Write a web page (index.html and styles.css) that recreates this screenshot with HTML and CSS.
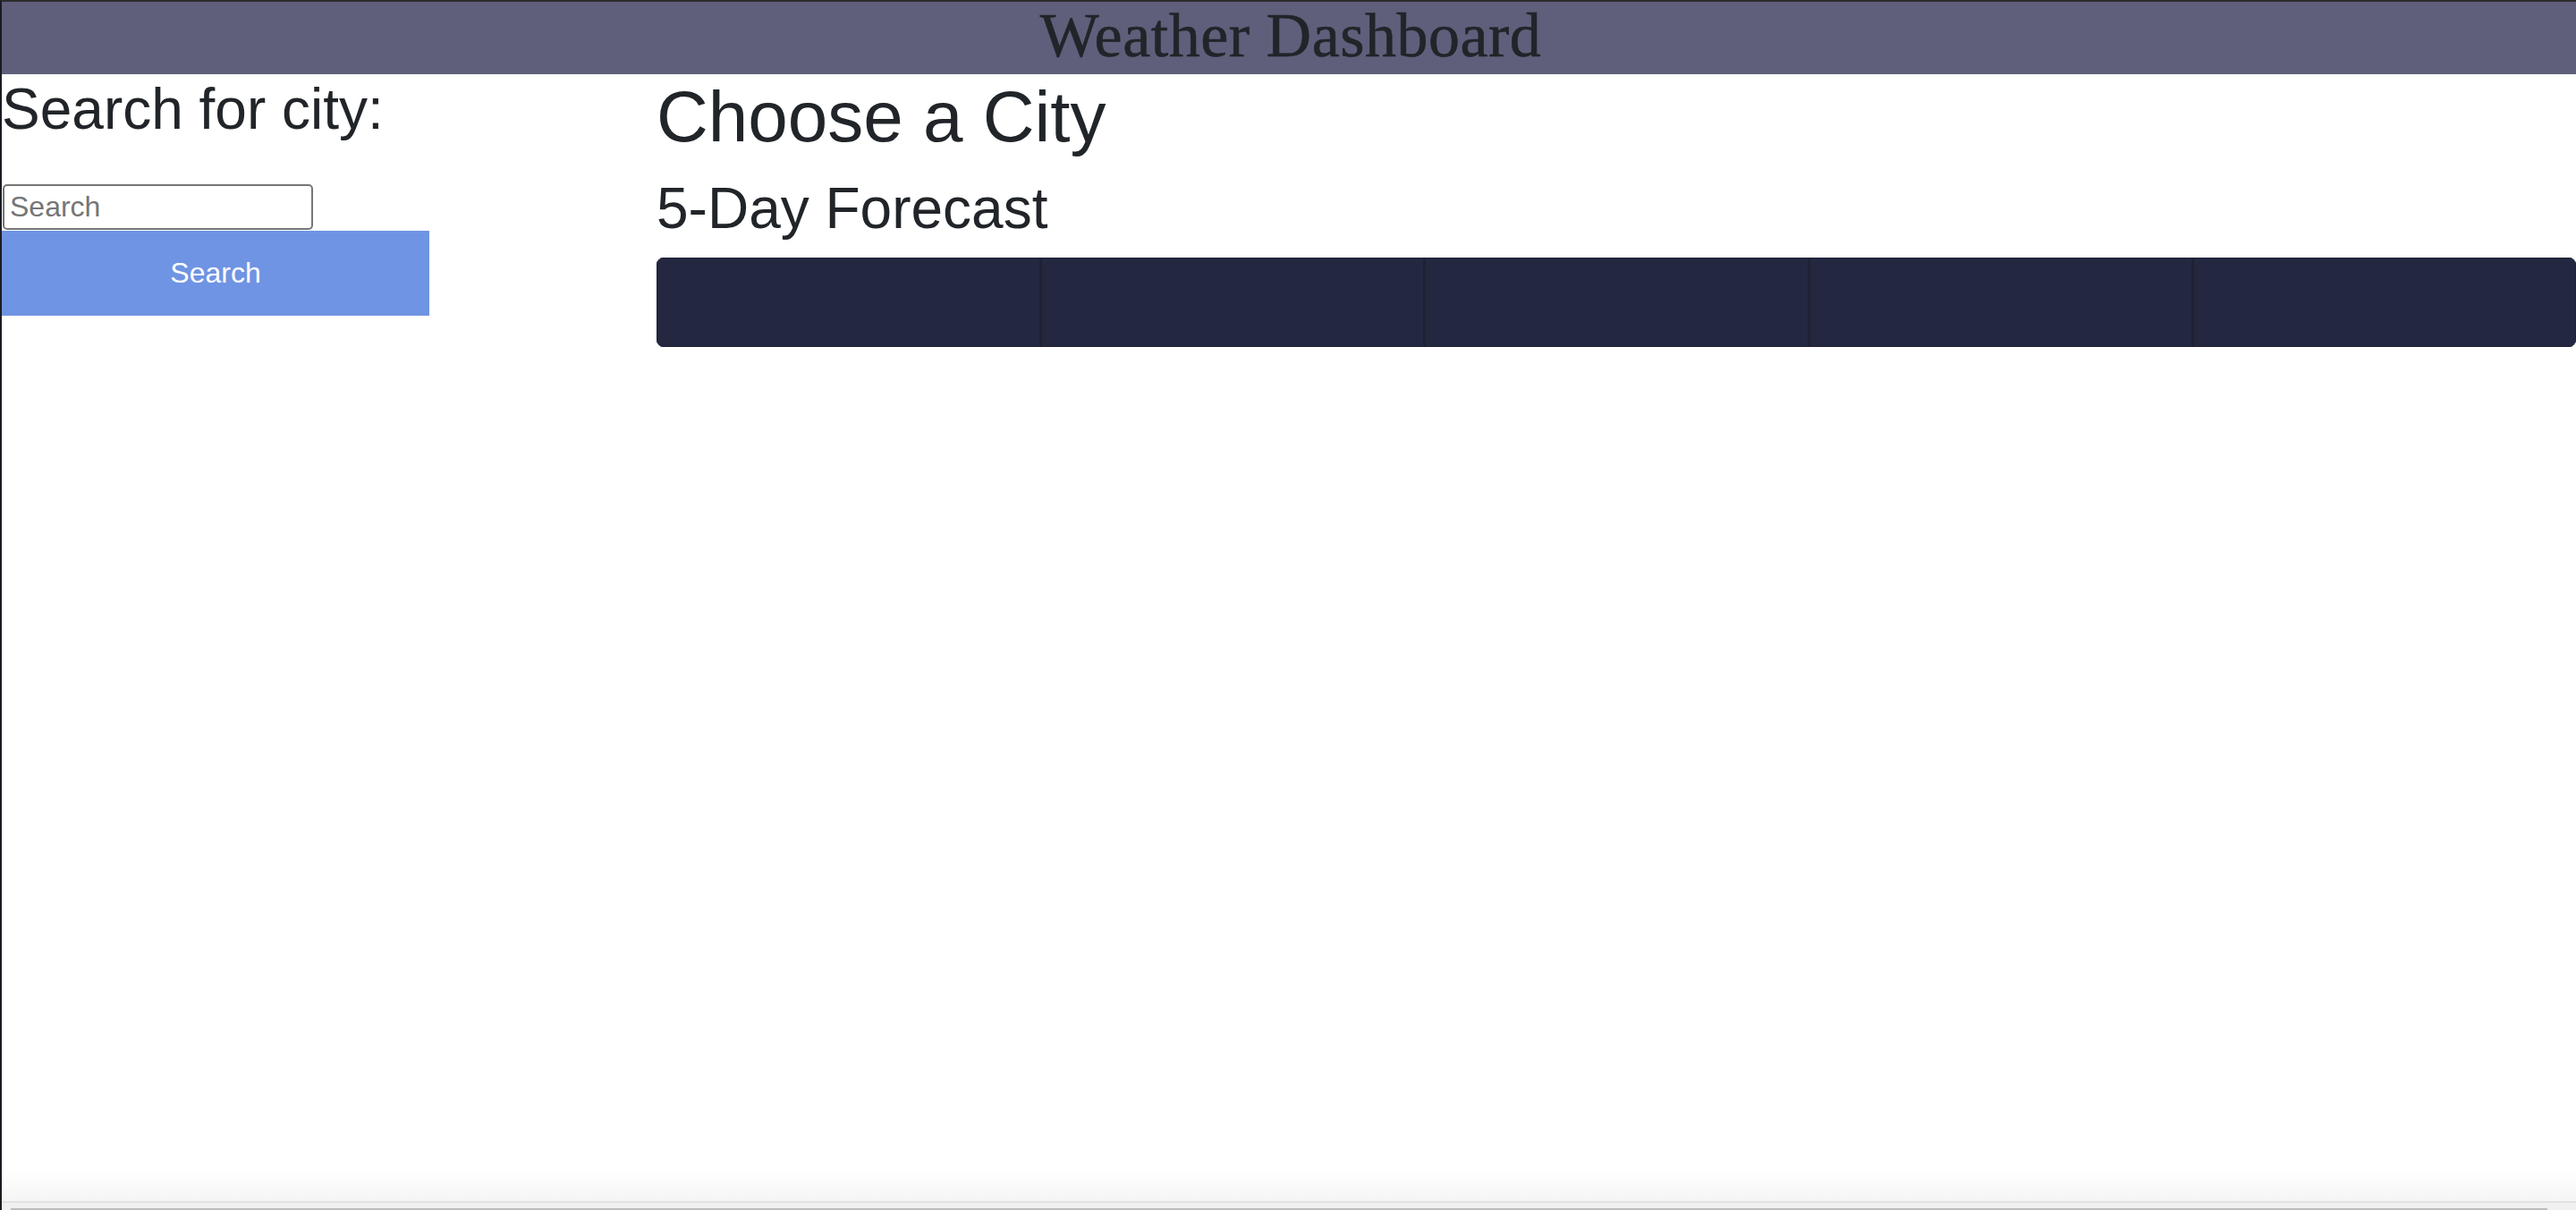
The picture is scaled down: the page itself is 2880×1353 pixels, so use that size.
FILE: index.html
```html
<!DOCTYPE html>
<html lang="en">
<head>
<meta charset="utf-8">
<title>Weather Dashboard</title>
<link rel="stylesheet" href="styles.css">
</head>
<body>
<div class="page">
  <header class="topbar">
    <h1 class="brand">Weather Dashboard</h1>
  </header>
  <main class="layout">
    <aside class="sidebar">
      <h2 class="side-title">Search for city:</h2>
      <input class="search-input" type="text" placeholder="Search">
      <button class="search-btn" type="button">Search</button>
    </aside>
    <section class="content">
      <h1 class="city-title">Choose a City</h1>
      <h2 class="forecast-title">5-Day Forecast</h2>
      <div class="forecast">
        <div class="day"></div>
        <div class="day"></div>
        <div class="day"></div>
        <div class="day"></div>
        <div class="day"></div>
      </div>
    </section>
  </main>
  <div class="hscroll"><div class="hscroll-thumb"></div></div>
</div>
</body>
</html>
```

FILE: styles.css
```css
* { box-sizing: border-box; }

html, body {
  margin: 0;
  padding: 0;
  background: #ffffff;
}

body {
  font-family: "Liberation Sans", Arial, sans-serif;
  color: #212529;
}

.page {
  min-height: 100vh;
  border-top: 2px solid #2b2b2d;
  border-left: 2px solid #1b1b22;
}

.topbar {
  height: 81px;
  background: #5f5f7b;
  display: flex;
  justify-content: center;
  align-items: flex-start;
}

.brand {
  margin: 0 0 0 4px;
  font-family: "Liberation Serif", "Times New Roman", serif;
  font-weight: 400;
  font-size: 70px;
  line-height: 75px;
  color: #212529;
  letter-spacing: 0.5px;
  -webkit-text-stroke: 0.6px #212529;
}

.layout {
  display: grid;
  grid-template-columns: 478px 1fr;
  column-gap: 254px;
}

.sidebar {
  display: flex;
  flex-direction: column;
  align-items: flex-start;
  padding-top: 1px;
}

.side-title {
  margin: 0 0 45px;
  font-size: 64px;
  font-weight: 400;
  line-height: 1.2;
  color: #212529;
}

.search-input {
  width: 347px;
  height: 51px;
  margin: 0 0 1px 1px;
  padding: 0 6px;
  border: 2px solid #767676;
  border-radius: 5px;
  font-family: "Liberation Sans", Arial, sans-serif;
  font-size: 32px;
  color: #212529;
  background: #fff;
}

.search-input::placeholder {
  color: #757575;
}

.search-btn {
  width: 478px;
  height: 95px;
  margin: 0;
  border: none;
  background: #6f94e3;
  color: #ffffff;
  font-family: "Liberation Sans", Arial, sans-serif;
  font-size: 32px;
  padding: 0;
}

.content {
  display: flex;
  flex-direction: column;
}

.city-title {
  margin: 0 0 16px;
  font-size: 80px;
  font-weight: 400;
  line-height: 1.2;
  color: #212529;
}

.forecast-title {
  margin: 0 0 16px;
  font-size: 64px;
  font-weight: 400;
  line-height: 1.2;
  color: #212529;
}

.forecast {
  display: grid;
  grid-template-columns: repeat(5, 1fr);
  height: 100px;
  background: #232840;
  border-radius: 8px;
  overflow: hidden;
}

.day {
  border: 1px solid #1e2234;
}

.day + .day {
  border-left: 2px solid #1e2234;
}

.hscroll {
  position: fixed;
  left: 2px;
  right: 0;
  bottom: 0;
  height: 44px;
  background: linear-gradient(to bottom, rgba(240, 240, 240, 0) 0%, rgba(240, 240, 240, 0.7) 80%);
  display: flex;
  flex-direction: column;
  justify-content: flex-end;
  pointer-events: none;
}

.hscroll-thumb {
  height: 10px;
  border-top: 2px solid #e2e2e2;
  background: #f0f0f0;
  position: relative;
}

.hscroll-thumb::after {
  content: "";
  position: absolute;
  left: 10px;
  right: 32px;
  bottom: 0;
  height: 2px;
  background: #bdbdbd;
}
```
